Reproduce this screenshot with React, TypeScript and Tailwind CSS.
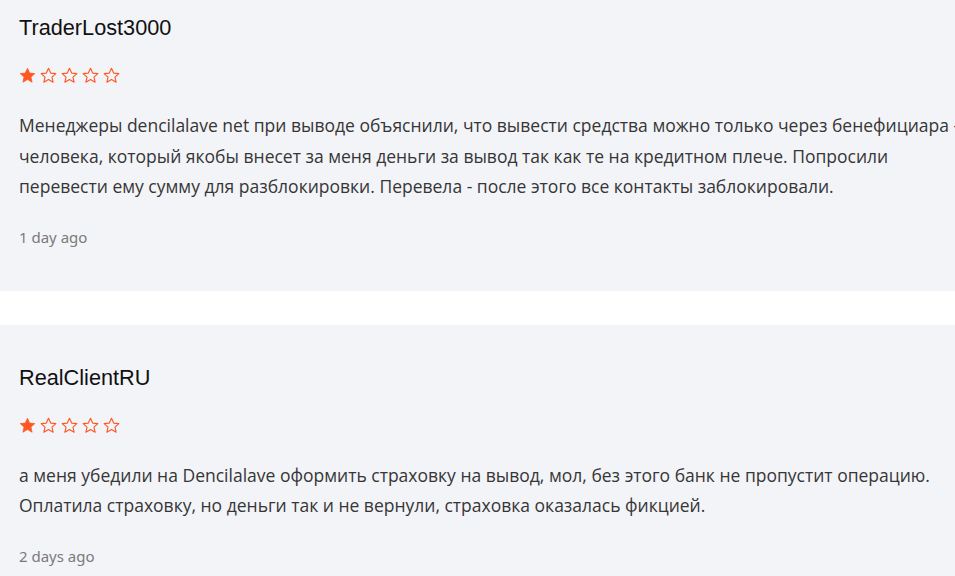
import React from "react";

const reviews = [
  {
    author: "TraderLost3000",
    rating: 1,
    text: "Менеджеры dencilalave net при выводе объяснили, что вывести средства можно только через бенефициара -\nчеловека, который якобы внесет за меня деньги за вывод так как те на кредитном плече. Попросили\nперевести ему сумму для разблокировки. Перевела - после этого все контакты заблокировали.",
    time: "1 day ago",
  },
  {
    author: "RealClientRU",
    rating: 1,
    text: "а меня убедили на Dencilalave оформить страховку на вывод, мол, без этого банк не пропустит операцию.\nОплатила страховку, но деньги так и не вернули, страховка оказалась фикцией.",
    time: "2 days ago",
  },
];

function Star({ filled }: { filled: boolean }) {
  return (
    <svg width="17" height="17" viewBox="0 0 24 24" className="shrink-0">
      <polygon
        points="12,1.8 15.1,8.6 22.4,9.3 16.9,14.2 18.5,21.5 12,17.7 5.5,21.5 7.1,14.2 1.6,9.3 8.9,8.6"
        fill={filled ? "#ff5722" : "none"}
        stroke="#ff5722"
        strokeWidth={filled ? 1 : 1.6}
        strokeLinejoin="round"
      />
    </svg>
  );
}

export default function App() {
  return (
    <div className="w-[955px] h-[576px] overflow-hidden bg-white">
      <div className="-mt-[25px] flex flex-col gap-[34px]">
        {reviews.map((r, i) => (
          <div key={i} className="bg-[#f3f4f8] pt-[40px] pb-[43px] px-[19px] w-[1100px]">
            <h3
              className="text-[21.7px] leading-[26px] text-[#111]"
              style={{ fontFamily: '"Liberation Sans", Arial, sans-serif' }}
            >
              {r.author}
            </h3>
            <div className="mt-[26px] flex gap-[4px] h-[17px]">
              {[0, 1, 2, 3, 4].map((s) => (
                <Star key={s} filled={s < r.rating} />
              ))}
            </div>
            <p
              className="mt-[26px] whitespace-pre-line text-[17.5px] leading-[30.5px] text-[#363636]"
              style={{ fontFamily: '"Open Sans", sans-serif' }}
            >
              {r.text}
            </p>
            <div
              className="mt-[24px] text-[15px] leading-[22px] text-[#7a7a7a]"
              style={{ fontFamily: '"Noto Sans", sans-serif' }}
            >
              {r.time}
            </div>
          </div>
        ))}
      </div>
    </div>
  );
}
